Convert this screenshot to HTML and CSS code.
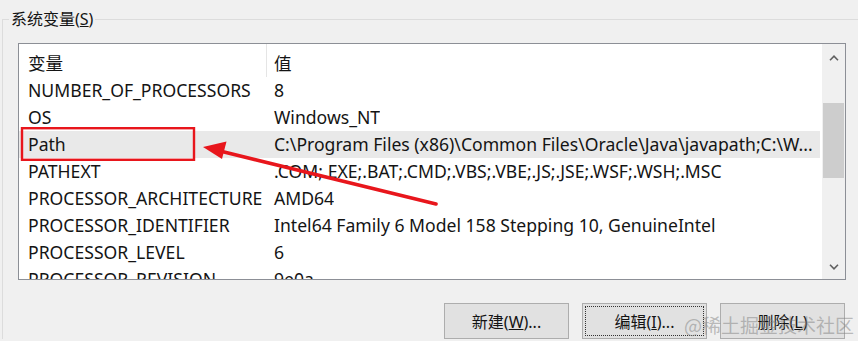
FILE: index.html
```html
<!DOCTYPE html>
<html lang="zh-CN">
<head>
	<meta charset="UTF-8">
	<title>系统变量</title>
	<link rel="stylesheet" href="styles.css">
</head>
<body>
	<fieldset class="group">
		<legend class="group-title">系统变量(<u>S</u>)</legend>
		<div class="listbox">
			<div class="list">
				<div class="row head"><span class="name">变量</span><span class="value">值</span></div>
				<div class="row"><span class="name">NUMBER_OF_PROCESSORS</span><span class="value">8</span></div>
				<div class="row"><span class="name">OS</span><span class="value">Windows_NT</span></div>
				<div class="row selected"><span class="name">Path</span><span class="value">C:\Program Files (x86)\Common Files\Oracle\Java\javapath;C:\W...</span></div>
				<div class="row"><span class="name">PATHEXT</span><span class="value">.COM;.EXE;.BAT;.CMD;.VBS;.VBE;.JS;.JSE;.WSF;.WSH;.MSC</span></div>
				<div class="row"><span class="name">PROCESSOR_ARCHITECTURE</span><span class="value">AMD64</span></div>
				<div class="row"><span class="name">PROCESSOR_IDENTIFIER</span><span class="value">Intel64 Family 6 Model 158 Stepping 10, GenuineIntel</span></div>
				<div class="row"><span class="name">PROCESSOR_LEVEL</span><span class="value">6</span></div>
				<div class="row"><span class="name">PROCESSOR_REVISION</span><span class="value">9e0a</span></div>
			</div>
			<div class="scroll">
				<span class="scroll-btn up">
					<svg width="10" height="6" viewBox="0 0 10 6"><polyline points="1,5.2 5,1.2 9,5.2" fill="none" stroke="#606060" stroke-width="1.6"/></svg>
				</span>
				<span class="thumb"></span>
				<span class="scroll-btn down">
					<svg width="10" height="6" viewBox="0 0 10 6"><polyline points="1,0.8 5,4.8 9,0.8" fill="none" stroke="#606060" stroke-width="1.6"/></svg>
				</span>
			</div>
		</div>
		<div class="buttons">
			<button class="btn">新建(<u>W</u>)...</button>
			<button class="btn focus">编辑(<u>I</u>)...</button>
			<button class="btn">删除(<u>L</u>)</button>
		</div>
	</fieldset>

	<!-- annotation -->
	<svg class="note" width="858" height="341" viewBox="0 0 858 341">
		<rect x="22" y="128.2" width="172" height="31.6" fill="none" stroke="#e8161c" stroke-width="2.4"/>
		<line x1="220" y1="151" x2="436" y2="204" stroke="#e8161c" stroke-width="3.6" stroke-linecap="round"/>
		<polygon points="203,147 226.5,141.5 222,159" fill="#e8161c"/>
	</svg>

	<div class="watermark">@稀土掘金技术社区</div>
</body>
</html>
```

FILE: styles.css
```css
html, body {
	margin: 0;
}
body {
	background: #f0f0f0;
	color: #141414;
	font-family: "Noto Sans", "Noto Sans CJK SC", sans-serif;
	height: 341px;
	overflow: hidden;
	position: relative;
	width: 858px;
}

/* group box */
fieldset.group {
	border: 1px solid #dcdcdc;
	border-bottom: none;
	border-right: none;
	margin: 9px 0 0 2px;
	min-width: 0;
	padding: 14px 12px 0 15px;
}
legend.group-title {
	font-size: 16px;
	line-height: 20px;
	margin-left: -9px;
	padding: 0 2px;
}

/* list view */
.listbox {
	background: #fff;
	border: 1px solid #8c8f96;
	display: flex;
	height: 235px;
	overflow: hidden;
}
.list {
	flex: 1;
	font-size: 17.6px;
	min-width: 0;
	overflow: hidden;
}
.row {
	display: flex;
	height: 27px;
	line-height: 27px;
	white-space: nowrap;
}
.row .name {
	box-sizing: border-box;
	flex: none;
	padding-left: 9px;
	width: 248px;
}
.row .value {
	overflow: hidden;
	padding-left: 7px;
}
.row.head {
	height: 33px;
}
.row.head .name,
.row.head .value {
	line-height: 28px;
	padding-top: 5px;
}
.row.head .name {
	border-right: 1px solid #e5e5e5;
}
.row.selected {
	background: #e9e9e9;
	margin-right: 2px;
}

/* scrollbar */
.scroll {
	align-items: center;
	background: #f0f0f0;
	display: flex;
	flex: none;
	flex-direction: column;
	width: 23px;
}
.scroll-btn {
	align-items: center;
	display: flex;
	height: 28px;
	justify-content: center;
	width: 100%;
}
.scroll-btn.down {
	height: 24px;
	margin-top: auto;
}
.thumb {
	background: #cdcdcd;
	height: 75px;
	margin-top: 31px;
	width: 21px;
}

/* buttons */
.buttons {
	display: flex;
	gap: 13px;
	justify-content: flex-end;
	margin-top: 23px;
	padding-right: 1px;
}
.btn {
	background: #e1e1e1;
	border: 1px solid #adadad;
	color: #141414;
	font: 16px "Noto Sans", "Noto Sans CJK SC", sans-serif;
	height: 36px;
	padding: 0;
	width: 125px;
}
.btn.focus {
	outline: 1px dotted #333;
	outline-offset: -4px;
}

/* overlays */
svg.note {
	left: 0;
	pointer-events: none;
	position: absolute;
	top: 0;
}
.watermark {
	color: rgba(130, 130, 130, .5);
	font: 19px "Noto Sans CJK SC", sans-serif;
	left: 684px;
	pointer-events: none;
	position: absolute;
	top: 311px;
}
```
